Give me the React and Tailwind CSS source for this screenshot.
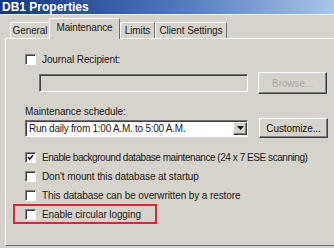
function Checkbox({ checked }) {
  return (
    <span className="flex h-[11px] w-[11px] shrink-0 items-center justify-center border border-t-[#808080] border-l-[#808080] border-r-white border-b-white bg-white shadow-[inset_1px_1px_0_#404040]">
      {checked && (
        <svg width="7" height="7" viewBox="0 0 7 7">
          <path d="M1 3 L2.8 5 L6 1.2" stroke="#111" strokeWidth="1.5" fill="none" />
        </svg>
      )}
    </span>
  );
}

function CheckRow({ checked, label, tight }) {
  return (
    <div className="flex h-[19px] items-center gap-[6px]">
      <Checkbox checked={checked} />
      <span className={"whitespace-nowrap " + (tight ? "tracking-[-0.45px]" : "")}>{label}</span>
    </div>
  );
}

function Button({ children, disabled, className = "" }) {
  return (
    <div
      className={
        "flex items-center justify-center border border-t-white border-l-white border-r-[#404040] border-b-[#404040] bg-[#d6d3cc] shadow-[inset_-1px_-1px_0_#808080] " +
        (disabled ? "text-[#a8a59e] " : "text-[#111] ") +
        className
      }
    >
      {children}
    </div>
  );
}

const tabs = [
  { label: "General", w: "w-[40px]" },
  { label: "Maintenance", w: "w-[71px]", active: true },
  { label: "Limits", w: "w-[35px]" },
  { label: "Client Settings", w: "w-[72px]" },
];

export default function App() {
  return (
    <div className="h-[248px] w-[334px] overflow-hidden bg-[#d6d3cc] text-[10px] tracking-[-0.1px] text-[#1a1a1a] font-['Liberation_Sans',Arial,sans-serif]">
      <div className="flex h-[14px] items-center bg-gradient-to-r from-[#15377e] via-[#4a73b8] to-[#a9c6ea] pl-[2px] text-[12px] font-bold tracking-normal text-white">
        DB1 Properties
      </div>
      <div className="h-[1px] bg-[#eeece7]" />

      <div className="pl-[5px] pt-[4px]">
        <div className="flex h-[19px] items-end pl-[5px]">
          {tabs.map((t) => (
            <div
              key={t.label}
              className={
                t.active
                  ? "relative z-10 -mb-[1px] -ml-[1px] flex h-[21px] items-center justify-center rounded-t-[2px] border border-b-0 border-t-white border-l-white border-r-[#707070] bg-[#d6d3cc] pb-[3px] whitespace-nowrap " + t.w
                  : "flex h-[16px] items-center justify-center rounded-t-[2px] border border-b-0 border-t-white border-l-white border-r-[#707070] whitespace-nowrap " + t.w
              }
            >
              {t.label}
            </div>
          ))}
        </div>

        <div className="flex h-[208px] w-[340px] flex-col border border-r-0 border-t-white border-l-white border-b-[#707070] pl-[19px] pt-[11px]">
          <CheckRow label="Journal Recipient:" />
          <div className="mt-[3px] flex items-center gap-[10px] pl-[14px]">
            <div className="h-[18px] w-[209px] border border-t-[#707070] border-l-[#707070] border-r-white border-b-white shadow-[inset_1px_1px_0_#404040]" />
            <Button disabled className="h-[22px] w-[69px]">
              Browse...
            </Button>
          </div>

          <div className="mt-[10px] flex h-[14px] items-center">Maintenance schedule:</div>
          <div className="flex h-[20px] items-center gap-[11px]">
            <div className="flex h-[17px] w-[223px] items-center border border-t-[#707070] border-l-[#707070] border-r-white border-b-white bg-white shadow-[inset_1px_1px_0_#404040]">
              <span className="flex-1 whitespace-nowrap pl-[3px] tracking-[-0.25px]">Run daily from 1:00 A.M. to 5:00 A.M.</span>
              <Button className="h-[13px] w-[14px]">
                <svg width="7" height="4" viewBox="0 0 7 4">
                  <path d="M0 0 H7 L3.5 4 Z" fill="#111" />
                </svg>
              </Button>
            </div>
            <Button className="h-[20px] w-[69px]">Customize...</Button>
          </div>

          <div className="mt-[10px]">
            <CheckRow checked tight label="Enable background database maintenance (24 x 7 ESE scanning)" />
            <CheckRow label="Don't mount this database at startup" />
            <CheckRow label="This database can be overwritten by a restore" />
            <div className="-ml-[12px] -mt-[1px] flex h-[20px] w-[144px] items-center gap-[6px] border-2 border-[#d8263a] pl-[10px]">
              <Checkbox />
              <span className="whitespace-nowrap">Enable circular logging</span>
            </div>
          </div>
        </div>
      </div>
    </div>
  );
}
